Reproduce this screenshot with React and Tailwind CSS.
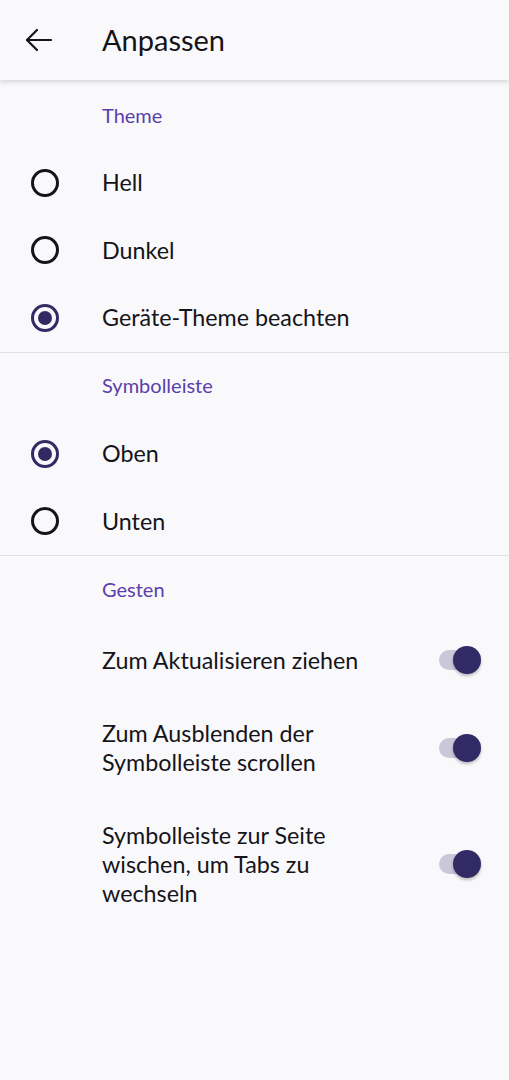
import React from "react";

const font = { fontFamily: "Lato, 'Noto Sans', sans-serif" };

function Radio({ checked }) {
  return checked ? (
    <div className="w-[28px] h-[28px] rounded-full border-[3px] border-[#312a65] flex items-center justify-center">
      <div className="w-[14px] h-[14px] rounded-full bg-[#312a65]" />
    </div>
  ) : (
    <div className="w-[28px] h-[28px] rounded-full border-[3px] border-[#15141a]" />
  );
}

function Toggle() {
  return (
    <div className="relative w-[46px] h-[28px] shrink-0">
      <div className="absolute left-[2px] top-[4px] w-[38px] h-[20px] rounded-full bg-[#c9c7d8]" />
      <div className="absolute left-[16px] top-0 w-[28px] h-[28px] rounded-full bg-[#312a65] shadow-[0_2px_3px_rgba(0,0,0,0.25)]" />
    </div>
  );
}

function Category({ children, first }) {
  return (
    <div
      className={
        (first ? "h-[69px] pt-[23px]" : "h-[67.5px] pt-[20.5px]") +
        " pl-[102px] text-[20px] leading-[24px] text-[#5b40ab]"
      }
    >
      {children}
    </div>
  );
}

function RadioRow({ label, checked }) {
  return (
    <div className="h-[67.5px] flex items-center">
      <div className="w-[102px] flex justify-center pr-[12px]">
        <Radio checked={checked} />
      </div>
      <span className="text-[23.3px] leading-[29px] text-[#15141a]">{label}</span>
    </div>
  );
}

function ToggleRow({ lines }) {
  return (
    <div className="flex items-center py-[22px] pl-[102px] pr-[26px]">
      <div className="flex-1 text-[23.3px] leading-[29px] text-[#15141a]">
        {lines.map((l, i) => (
          <div key={i}>{l}</div>
        ))}
      </div>
      <Toggle />
    </div>
  );
}

export default function App() {
  return (
    <div className="w-[509px] h-[1080px] bg-[#f9f9fb] overflow-hidden" style={font}>
      <div className="h-[80px] flex items-center bg-[#f9f9fb] shadow-[0_2px_5px_rgba(0,0,0,0.15)] relative z-10">
        <div className="w-[102px] flex justify-center pr-[24px]">
          <svg width="28" height="24" viewBox="0 0 28 24" fill="none" stroke="#15141a" strokeWidth="2.2" strokeLinecap="round" strokeLinejoin="round">
            <path d="M26 12H2" />
            <path d="M12 2L2 12l10 10" />
          </svg>
        </div>
        <span className="text-[29px] leading-[36px] text-[#15141a]">Anpassen</span>
      </div>

      <Category first>Theme</Category>
      <RadioRow label="Hell" />
      <RadioRow label="Dunkel" />
      <RadioRow label="Geräte-Theme beachten" checked />
      <div className="h-px bg-[#e0e0e6]" />

      <Category>Symbolleiste</Category>
      <RadioRow label="Oben" checked />
      <RadioRow label="Unten" />
      <div className="h-px bg-[#e0e0e6]" />

      <Category>Gesten</Category>
      <ToggleRow lines={["Zum Aktualisieren ziehen"]} />
      <ToggleRow lines={["Zum Ausblenden der", "Symbolleiste scrollen"]} />
      <ToggleRow lines={["Symbolleiste zur Seite", "wischen, um Tabs zu", "wechseln"]} />
    </div>
  );
}
